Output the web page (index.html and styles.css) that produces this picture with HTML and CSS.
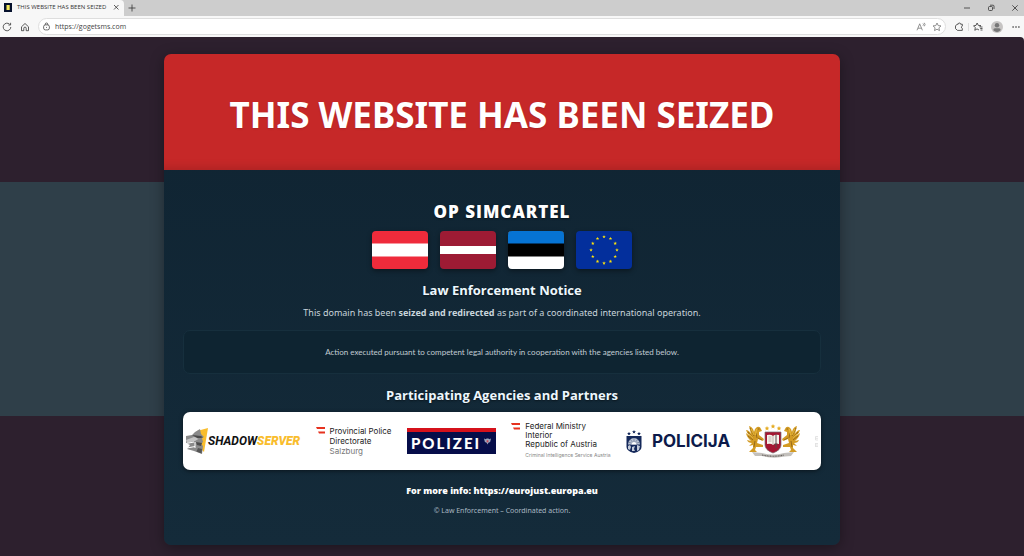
FILE: index.html
```html
<!DOCTYPE html>
<html lang="en">
<head>
    <meta charset="UTF-8">
    <meta name="viewport" content="width=device-width, initial-scale=1.0">
    <title>THIS WEBSITE HAS BEEN SEIZED</title>
    <link rel="stylesheet" href="styles.css">
</head>
<body>
    <header class="browser">
        <div class="tabs">
            <div class="tab">
                <svg class="favicon" viewBox="0 0 8 9"><rect width="8" height="9" fill="#06122e"/><rect x="2.5" y="2" width="3.2" height="5" fill="#f6ea5b"/></svg>
                <span class="tab-title">THIS WEBSITE HAS BEEN SEIZED</span>
                <button class="icon-btn" aria-label="Close tab"><svg viewBox="0 0 10 10"><path d="M3 3l4.500 4.500M7.500 3L3 7.500"/></svg></button>
            </div>
            <button class="icon-btn new-tab" aria-label="New tab"><svg viewBox="0 0 10 10"><path d="M5 1.500v7M1.500 5h7"/></svg></button>
            <div class="window-buttons">
                <button class="icon-btn" aria-label="Minimize"><svg viewBox="0 0 10 10"><path d="M2 5h6"/></svg></button>
                <button class="icon-btn" aria-label="Restore"><svg viewBox="0 0 10 10"><rect x="2.500" y="3.500" width="4" height="4" rx="1"/><path d="M4 2.200h3a1 1 0 0 1 1 1V6"/></svg></button>
                <button class="icon-btn" aria-label="Close"><svg viewBox="0 0 10 10"><path d="M2.300 2.300l5.400 5.400M7.700 2.300L2.300 7.700"/></svg></button>
            </div>
        </div>
        <div class="toolbar">
            <button class="icon-btn" aria-label="Refresh"><svg viewBox="0 0 10 10"><path d="M8.800 5a3.800 3.800 0 1 1-1.200-2.800M8.600 .8v2.200H6.400"/></svg></button>
            <button class="icon-btn" aria-label="Home"><svg viewBox="0 0 10 10"><path d="M1.500 4.800L5 1.500l3.500 3.300v3.900H6.200V6.300a1.200 1.200 0 0 0-2.400 0v2.400H1.500z"/></svg></button>
            <div class="address">
                <svg class="lock" viewBox="0 0 10 10"><rect x="1.800" y="3.200" width="6.400" height="5.600" rx="2"/><path d="M3.600 3.200V2.500a1.400 1.400 0 0 1 2.800 0v.7M5 5.500v1"/></svg>
                <input type="text" aria-label="Address" value="https://gogetsms.com">
                <button class="icon-btn soft" aria-label="Read aloud"><svg viewBox="0 0 10 10"><path d="M1 8.300L3.700 1.800l2.700 6.500M2 6.200h3.500M7 1.500q1 1 0 2.200M8.300 .8q1.500 1.800 0 3.500"/></svg></button>
                <button class="icon-btn soft" aria-label="Add to favorites"><svg viewBox="0 0 10 10"><path d="M5 1l1.200 2.600 2.800.3-2.100 1.900.6 2.800L5 7.200 2.500 8.600l.6-2.800L1 3.900l2.800-.3z"/></svg></button>
            </div>
            <button class="icon-btn" aria-label="Extensions"><svg viewBox="0 0 10 10"><path d="M3 2.200h1.200a1.200 1.200 0 0 1 2.400 0H8.300v1.900a1.200 1.200 0 0 0 0 2.300v2H3.500L1.500 6.600V4z"/></svg></button>
            <span class="divider"></span>
            <button class="icon-btn" aria-label="Favorites"><svg viewBox="0 0 10 10"><path d="M6 8L4 6.900 1.800 8.300l.5-2.700L.5 3.800l2.500-.4L4.100 1l1.200 2.400 2.700.3L6.300 5M7.200 5h2.300M7.200 6.500h2.300M7.500 8h2"/></svg></button>
            <button class="icon-btn profile" aria-label="Profile"><svg viewBox="0 0 12 12"><circle cx="6" cy="6" r="6" fill="#c6c4c3" stroke="none"/><circle cx="6" cy="4.300" r="2.200" fill="#777" stroke="none"/><path d="M2.300 9.300Q2.300 7.200 4 7.200h4q1.700 0 1.700 2.100Q6 12.500 2.300 9.300z" fill="#777" stroke="none"/></svg></button>
            <button class="icon-btn" aria-label="Settings"><svg viewBox="0 0 10 10"><path d="M1.500 5h1.200M4.400 5h1.200M7.300 5h1.200" stroke-width="1.300"/></svg></button>
        </div>
    </header>

    <div class="page">
        <main class="notice">
            <div class="banner">
                <h1>THIS WEBSITE HAS BEEN SEIZED</h1>
            </div>
            <div class="content">
                <h2 class="operation">OP SIMCARTEL</h2>
                <div class="flags">
                    <svg class="flag" viewBox="0 0 57 38" preserveAspectRatio="none" role="img" aria-label="Austria"><rect width="57" height="38" fill="#ef2b3b"/><rect y="12.500" width="57" height="13" fill="#fff"/></svg>
                    <svg class="flag" viewBox="0 0 57 38" preserveAspectRatio="none" role="img" aria-label="Latvia"><rect width="57" height="38" fill="#9d1b34"/><rect y="15" width="57" height="8" fill="#fff"/></svg>
                    <svg class="flag" viewBox="0 0 57 38" preserveAspectRatio="none" role="img" aria-label="Estonia"><rect width="57" height="38" fill="#fff"/><rect width="57" height="25.500" fill="#000"/><rect width="57" height="12.500" fill="#0673d3"/></svg>
                    <svg class="flag" viewBox="0 0 57 38" preserveAspectRatio="none" role="img" aria-label="European Union">
                        <defs><path id="star" d="M0-1.900L.45-.6 1.800-.6.75.25 1.100 1.500 0 .75-1.100 1.500-.75.25-1.800-.6-.45-.6z" fill="#ffe40b"/></defs>
                        <rect width="57" height="38" fill="#032f9c"/>
                        <use href="#star" x="28.500" y="5.800"/><use href="#star" x="35.100" y="7.600"/><use href="#star" x="39.900" y="12.400"/><use href="#star" x="41.700" y="19"/>
                        <use href="#star" x="39.900" y="25.600"/><use href="#star" x="35.100" y="30.400"/><use href="#star" x="28.500" y="32.200"/><use href="#star" x="21.900" y="30.400"/>
                        <use href="#star" x="17.100" y="25.600"/><use href="#star" x="15.300" y="19"/><use href="#star" x="17.100" y="12.400"/><use href="#star" x="21.900" y="7.600"/>
                    </svg>
                </div>
                <h2>Law Enforcement Notice</h2>
                <p class="lead">This domain has been <strong>seized and redirected</strong> as part of a coordinated international operation.</p>
                <div class="authority">Action executed pursuant to competent legal authority in cooperation with the agencies listed below.</div>
                <h2>Participating Agencies and Partners</h2>
                <div class="partners">
                    <div class="partner shadowserver">
                        <svg class="shadow-mark" viewBox="0 0 22 26">
                            <path d="M11 3L22 0l-4 24-6-6z" fill="#f9bd2d"/>
                            <path d="M9 4l5-3 1 5 3 3-2 1 1 4-2 2 2 2-1 8-8-3-7-2 3-4-4-2V8l6-1z" fill="#8a8a8a"/>
                            <path d="M0 12l8-3 6 1-5 3-8 2z" fill="#c4c4c4"/>
                            <path d="M6 7l9 1 2 1.500-5 1zM10 14l6 1-1 3-4-1z" fill="#4b4b4b"/>
                            <path d="M0 15.500l8-1.500M1 20l8-1.500M9 14v6" stroke="#fff"/>
                            <path d="M12 20l4 1-.5 4.500-5-2z" fill="#555"/>
                        </svg>
                        <span>SHADOW<b>SERVER</b></span>
                    </div>
                    <div class="partner ministry">
                        <svg class="austria-mark" viewBox="0 0 10 7"><path d="M0 0h9v2H1zM2 4.500h7v2H3z" fill="#e6321f"/></svg>
                        <div>Provincial Police<br>Directorate<br><span class="place">Salzburg</span></div>
                    </div>
                    <div class="partner polizei">
                        <span>POLIZEI</span>
                        <svg class="eagle" viewBox="0 0 8 8"><path d="M0 1l2 1 1-1h2l1 1 2-1-1 4-2 1-1 2-1-2-2-1z" fill="#9ba5bd"/><path d="M3 3h2v2.500H3z" fill="#c44252"/></svg>
                    </div>
                    <div class="partner ministry federal">
                        <svg class="austria-mark" viewBox="0 0 10 7"><path d="M0 0h9v2H1zM2 4.500h7v2H3z" fill="#e6321f"/></svg>
                        <div>Federal Ministry<br>Interior<br>Republic of Austria<small>Criminal Intelligence Service Austria</small></div>
                    </div>
                    <div class="partner policija">
                        <svg class="shield" viewBox="0 0 16 23">
                            <g fill="#14285a"><path d="M3 1.700l.6 1.200 1.300.1-1 .9.300 1.300L3 4.500l-1.200.7.300-1.300-1-.9 1.300-.1zM8 0l.6 1.200 1.300.1-1 .9.300 1.300L8 2.800l-1.200.7.300-1.300-1-.9 1.300-.1zM13 1.700l.6 1.200 1.300.1-1 .9.300 1.300-1.200-.7-1.200.7.300-1.300-1-.9 1.300-.1z"/>
                            <path d="M.5 6h15v11q0 4-7.500 6Q.5 21 .5 17z"/></g>
                            <path d="M2 14.500a6 6.500 0 0 1 12 0z" fill="#b9c2d2"/>
                            <path d="M8 14V8M8 14L4 9M8 14l4-5M8 14l-6-2M8 14l6-2" stroke="#5a6988" stroke-width=".6"/>
                            <path d="M5.500 14.500a2.500 2.500 0 0 1 5 0z" fill="#fff"/>
                            <path d="M2 16l2-1 1 2-1 3-2-1zM6 17l3-1-1 3 1 2H6zM11 15l3 1-1 4-2 1z" fill="#c3cbd9"/>
                        </svg>
                        <span>POLICIJA</span>
                    </div>
                    <svg class="partner crest" viewBox="0 0 54 34" role="img" aria-label="State police crest">
                        <g id="griffin">
                            <path d="M0 6q3 0 5 4L3 2q4 1 5 6l1 4-1-4q0-3 3-5 3-1 4 2l1 2-3 1 0 3 5 4-1 2-5-2-1 4 6 2v2h-7l-1 3 2 2H3l4-4v-3l-4 1 3-3q-4 0-5-3l4 1Q.5 13 0 9l4 3Q.5 9 0 6z" fill="#d39b24"/>
                            <path d="M4 4l4 8M2 8l5 6M2 12l5 4M10 9l1 5M9 17l-1 6M12 5h1.500M12 14l4 2" stroke="#7d5515" stroke-width=".7"/>
                            <path d="M5 5l3 6M3 10l4 4M10.500 5l-1 6" stroke="#f0c545" stroke-width=".8"/>
                        </g>
                        <use href="#griffin" transform="translate(54 0) scale(-1 1)"/>
                        <path d="M19 8h16v13q0 5-8 8-8-3-8-8z" fill="#a51632" stroke="#797174" stroke-width=".7"/>
                        <path d="M21 11q4-1 6 1 2-2 6-1v9q-4-1-6 1-2-2-6-1z" fill="#f6f3ed"/>
                        <path d="M27 12v9M22.500 13h3M22.500 15h3M22.500 17h3" stroke="#9b8b80" stroke-width=".6"/>
                        <path d="M30 10v14M28.500 20h3" stroke="#5b494a" stroke-width="1"/>
                        <path d="M21 2l.7 1.500 1.600.2-1.200 1.100.3 1.600-1.400-.8-1.400.8.300-1.600-1.200-1.100 1.600-.2zM27 0l.7 1.500 1.600.2-1.200 1.100.3 1.600-1.400-.8-1.400.8.300-1.600-1.200-1.100 1.600-.2zM33 2l.7 1.500 1.600.2-1.200 1.100.3 1.600-1.400-.8-1.400.8.300-1.600-1.200-1.100 1.600-.2z" fill="#e5ac24"/>
                        <path d="M6 28l10 1q11 3 22 0l10-1-3 4-6 .5Q27 35 16 32l-7 0z" fill="#c3c0bc"/>
                        <path d="M16 31q11 2.500 22 0" fill="none" stroke="#66615e" stroke-width="1.200" stroke-dasharray="1 .6"/>
                    </svg>
                    <svg class="partner next" viewBox="0 0 3 11"><path d="M3 .5H.5v3.500H3M.5 2.300H3M.5 7v4M.5 7.500H3M.5 9H3M.5 10.500H3" fill="none" stroke="#ddd" stroke-width=".8"/></svg>
                </div>
                <a class="more-info" href="https://eurojust.europa.eu">For more info: https://eurojust.europa.eu</a>
                <footer>© Law Enforcement – Coordinated action.</footer>
            </div>
        </main>
    </div>
</body>
</html>
```
FILE: styles.css
```css
* {
    box-sizing: border-box;
}

body {
    display: flex;
    flex-direction: column;
    min-height: 100vh;
    margin: 0;
    background: #f7f7f7;
    font-family: "Noto Sans", "Open Sans", sans-serif;
}

h1, h2, p {
    margin: 0;
}

/* browser window */
.browser {
    color: #333;
}

.tabs {
    display: flex;
    align-items: center;
    height: 16px;
    background: #cdcdcd;
}

.tab {
    display: flex;
    align-items: center;
    width: 124px;
    height: 16px;
    padding: 0 3px 2px 4px;
    border-radius: 0 4px 0 0;
    background: #f7f7f7;
}

.favicon {
    width: 8px;
    height: 9px;
    margin-right: 5px;
}

.tab-title {
    flex: 1;
    font-family: "Open Sans", sans-serif;
    font-size: 6px;
    white-space: nowrap;
}

.icon-btn {
    display: flex;
    flex: none;
    width: 10px;
    height: 10px;
    padding: 0;
    border: 0;
    background: none;
    color: #333;
    cursor: pointer;
}

.icon-btn svg,
.lock {
    width: 100%;
    height: 100%;
    fill: none;
    stroke: currentColor;
    stroke-width: 0.8;
}

.new-tab {
    margin-left: 3px;
}

.window-buttons {
    display: flex;
    gap: 14px;
    margin-left: auto;
    padding-right: 4px;
}

.toolbar {
    display: flex;
    align-items: center;
    gap: 8px;
    height: 21px;
    padding: 0 3px 0 2px;
}

.address {
    display: flex;
    flex: 1;
    align-items: center;
    gap: 6px;
    height: 17px;
    padding: 0 3px;
    border: 1px solid #dedede;
    border-radius: 9px;
    background: #fff;
}

.address input {
    flex: 1;
    min-width: 0;
    margin-left: -2px;
    padding: 0;
    border: 0;
    outline: 0;
    background: none;
    color: #444;
    font-family: "Open Sans", sans-serif;
    font-size: 7px;
}

.address .lock {
    width: 9px;
    height: 9px;
}

.soft {
    color: #777;
}

.divider {
    width: 1px;
    height: 8px;
    margin: 0 -4px;
    background: #ddd;
}

.profile {
    width: 12px;
    height: 12px;
}

/* seized page */
.page {
    flex: 1;
    padding: 17px 20px 11px 0;
    border-radius: 0 4px 0 0;
    background: linear-gradient(#2d202e 28%, #2f3f49 28%, #2f3f49 73%, #2d202e 73%);
}

.notice {
    width: 676px;
    max-width: 100%;
    margin: 0 auto;
    overflow: hidden;
    border-radius: 7px;
    background: linear-gradient(#0f2331, #142b3a);
    box-shadow: 0 3px 14px rgba(0, 0, 0, 0.35);
    color: #fff;
    text-align: center;
}

.banner {
    padding: 36px 20px 30px;
    background: #c62828;
    box-shadow: inset 0 -10px 10px -8px rgba(0, 0, 0, 0.15);
}

h1 {
    font-size: 35px;
    line-height: 50px;
    text-shadow: 0 1px 2px rgba(0, 0, 0, 0.15);
}

.content {
    padding: 32px 19px 29px;
}

h2 {
    color: #edf7fd;
    font-family: "Open Sans", sans-serif;
    font-size: 13px;
    line-height: 20px;
    text-shadow: 0 1px 2px rgba(0, 0, 0, 0.5);
}

.operation {
    color: #fff;
    font-size: 17px;
    font-weight: 800;
    letter-spacing: 1px;
}

.flags {
    display: flex;
    justify-content: center;
    gap: 12px;
    margin: 9px 0 11px;
}

.flag {
    width: 56px;
    height: 38px;
    border-radius: 4px;
    box-shadow: 0 2px 5px rgba(0, 0, 0, 0.4);
}

.lead {
    margin: 6px 0 10px;
    color: #c9d5dc;
    font-size: 9px;
    line-height: 14px;
}

.authority {
    margin-bottom: 11px;
    padding: 16px 10px;
    border: 1px solid #162f3d;
    border-radius: 7px;
    background: #0e2431;
    color: #c1ccd3;
    font-family: Lato, sans-serif;
    font-size: 8px;
    line-height: 10px;
}

.partners {
    display: flex;
    align-items: center;
    justify-content: space-between;
    height: 58px;
    margin: 7px 0 14px;
    padding: 0 3px;
    overflow: hidden;
    border-radius: 7px;
    background: #fff;
    box-shadow: 0 1px 4px rgba(0, 0, 0, 0.5);
    color: #222;
    text-align: left;
}

.partner {
    flex: none;
}

.shadowserver,
.policija {
    display: flex;
    align-items: center;
}

.shadow-mark {
    width: 22px;
    height: 26px;
}

.shadowserver span {
    color: #111;
    font-family: Roboto, sans-serif;
    font-size: 12px;
    font-style: italic;
    font-weight: 700;
}

.shadowserver b {
    color: #f9bd2d;
}

.ministry {
    display: flex;
    gap: 4px;
    font-family: Inter, sans-serif;
    font-size: 8px;
    line-height: 10px;
}

.austria-mark {
    width: 10px;
    height: 7px;
    margin-top: 1px;
}

.place {
    color: #777;
}

.federal {
    line-height: 9px;
}

.federal small {
    display: block;
    margin-top: 2px;
    color: #888;
    font-size: 5px;
}

.polizei {
    display: flex;
    gap: 3px;
    width: 89px;
    height: 26px;
    padding: 0 4px;
    border-top: 4px solid #d5111b;
    background: #060d49;
    color: #fff;
    font-family: Lato, sans-serif;
    font-size: 15px;
    font-weight: 900;
    line-height: 22px;
    letter-spacing: 2px;
}

.eagle {
    width: 7px;
    height: 8px;
    margin-top: 5px;
}

.policija {
    gap: 10px;
    color: #0c1a4a;
    font-family: Inter, sans-serif;
    font-size: 17px;
    font-weight: 700;
}

.shield {
    width: 16px;
    height: 23px;
}

.crest {
    width: 54px;
    height: 34px;
}

.next {
    width: 3px;
    height: 11px;
}

.more-info {
    display: block;
    color: #fff;
    font-family: "Open Sans", sans-serif;
    font-size: 9px;
    font-weight: 800;
    line-height: 14px;
    text-decoration: none;
}

footer {
    margin-top: 8px;
    color: #a9b8c2;
    font-size: 7px;
    line-height: 10px;
}
```
